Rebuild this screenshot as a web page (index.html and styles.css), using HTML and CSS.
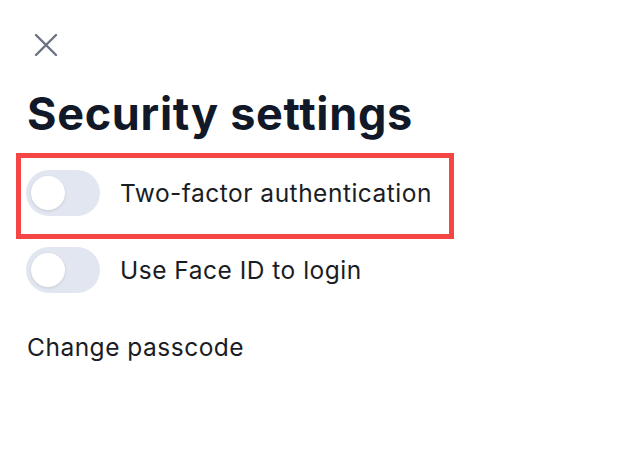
FILE: index.html
```html
<!DOCTYPE html>
<html lang="en">
<head>
<meta charset="utf-8">
<title>Security settings</title>
<link rel="stylesheet" href="styles.css">
</head>
<body>
<div class="screen">
  <button class="close" aria-label="Close">
    <svg width="24" height="24" viewBox="0 0 24 24" fill="none" stroke="#6b7280" stroke-width="2.4" stroke-linecap="round">
      <path d="M2 2 L22 22 M22 2 L2 22"/>
    </svg>
  </button>
  <h1 class="title">Security settings</h1>
  <div class="list">
    <div class="row highlighted">
      <span class="toggle"><span class="knob"></span></span>
      <span class="label">Two-factor authentication</span>
    </div>
    <div class="row">
      <span class="toggle"><span class="knob"></span></span>
      <span class="label">Use Face ID to login</span>
    </div>
    <div class="row plain">
      <span class="label">Change passcode</span>
    </div>
  </div>
</div>
</body>
</html>
```
FILE: styles.css
```css
* { box-sizing: border-box; }
html, body {
  margin: 0;
  background: #ffffff;
}
body {
  font-family: Inter, "Noto Sans", "Liberation Sans", sans-serif;
  color: #111827;
}
.screen {
  width: 625px;
  height: 458px;
  padding: 33px 0 0 27px;
  display: flex;
  flex-direction: column;
}
.close {
  width: 24px;
  height: 24px;
  padding: 0;
  margin: 0 0 0 7px;
  border: 0;
  background: none;
  display: block;
}
.close svg { display: block; }
.title {
  margin: 30px 0 0 0;
  font-size: 45px;
  font-weight: 700;
  line-height: 54px;
  letter-spacing: 0.7px;
  color: #111827;
}
.list {
  margin-top: 29px;
  display: flex;
  flex-direction: column;
  gap: 31px;
  margin-left: -1px;
}
.row {
  position: relative;
  display: flex;
  align-items: center;
  gap: 20px;
  height: 46px;
}
.highlighted::after {
  content: "";
  box-sizing: border-box;
  position: absolute;
  left: -10px;
  top: -17px;
  width: 438px;
  height: 86px;
  border: 5px solid #f54545;
}
.toggle {
  width: 74px;
  height: 46px;
  border-radius: 23px;
  background: #e2e6f0;
  display: flex;
  align-items: center;
  padding-left: 5px;
  flex: none;
}
.knob {
  width: 34px;
  height: 34px;
  border-radius: 50%;
  background: #ffffff;
  box-shadow: 0 1px 3px rgba(0, 0, 0, 0.12);
}
.label {
  font-size: 24.5px;
  letter-spacing: 0.5px;
  color: #1a1d24;
}
.plain { margin-left: 1px; }
```
